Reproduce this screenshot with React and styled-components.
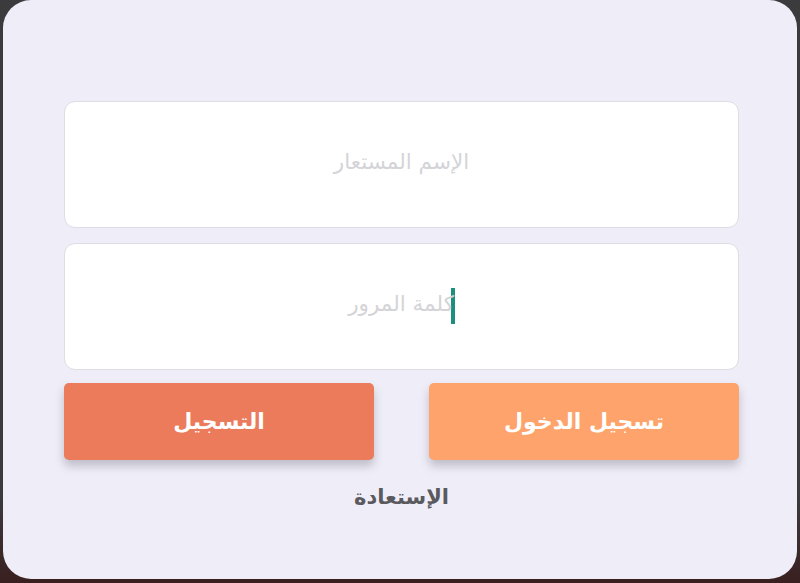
import React from "react";
import styled, { createGlobalStyle } from "styled-components";

const GlobalStyle = createGlobalStyle`
  html, body {
    margin: 0;
    padding: 0;
    background: #3b3b3d;
    font-family: "DejaVu Sans", "Noto Sans", sans-serif;
  }
`;

const Page = styled.div`
  width: 800px;
  height: 583px;
  padding: 0 3px 4px 3px;
  box-sizing: border-box;
  background: linear-gradient(to bottom, #3b3b3d 85%, #3a1f20 100%);
`;

const Card = styled.div`
  height: 100%;
  background: #efeef8;
  border-radius: 28px;
  box-sizing: border-box;
  padding: 101px 58px 0 61px;
  display: flex;
  flex-direction: column;
  align-items: stretch;
`;

const Field = styled.div`
  height: 127px;
  background: #ffffff;
  border: 1px solid #dddde3;
  border-radius: 11px;
  box-sizing: border-box;
  display: flex;
  align-items: center;
  justify-content: center;
  padding-bottom: 6px;
  margin-bottom: ${(p) => p.$gap || 0}px;
  direction: rtl;
`;

const Placeholder = styled.span`
  color: #d4d4d8;
  font-size: 21.5px;
`;

const Caret = styled.span`
  display: inline-block;
  width: 4px;
  height: 36px;
  background: #1c8f7e;
  margin-left: -3px;
  margin-top: 4px;
`;

const Buttons = styled.div`
  display: flex;
  justify-content: space-between;
  margin-top: 13px;
`;

const Button = styled.button`
  width: 310px;
  height: 77px;
  border: none;
  border-radius: 5px;
  background: ${(p) => p.$bg};
  color: #ffffff;
  font-family: "DejaVu Sans", sans-serif;
  font-weight: bold;
  font-size: 22px;
  padding-bottom: 2px;
  box-shadow: 0 6px 10px rgba(60, 60, 80, 0.28);
  cursor: pointer;
  direction: rtl;
`;

const Restore = styled.div`
  text-align: center;
  margin-top: 25px;
  color: #5a5a5e;
  font-weight: bold;
  font-size: 21px;
  direction: rtl;
`;

export default function App() {
  return (
    <>
      <GlobalStyle />
      <Page>
        <Card>
          <Field $gap={15}>
            <Placeholder>الإسم المستعار</Placeholder>
          </Field>
          <Field>
            <Caret />
            <Placeholder>كلمة المرور</Placeholder>
          </Field>
          <Buttons>
            <Button $bg="#eb7b5b">التسجيل</Button>
            <Button $bg="#fea36b">تسجيل الدخول</Button>
          </Buttons>
          <Restore>الإستعادة</Restore>
        </Card>
      </Page>
    </>
  );
}
